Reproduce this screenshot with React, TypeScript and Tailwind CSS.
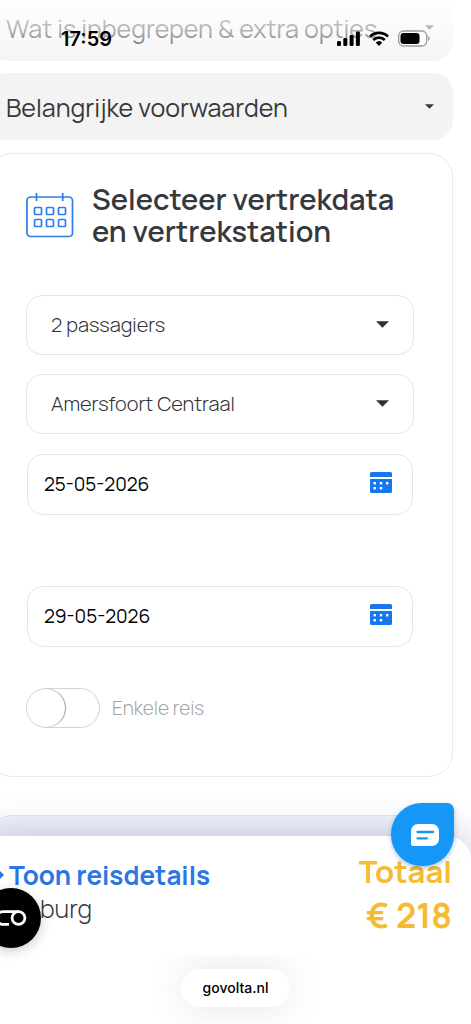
import { useState } from "react";
import type { ReactNode } from "react";

function Caret({ className }: { className: string }) {
  return (
    <svg viewBox="0 0 12 6" className={className} fill="currentColor" aria-hidden="true">
      <path d="M0 0h12L6 6z" />
    </svg>
  );
}

function CalendarOutline() {
  return (
    <svg viewBox="0 0 48 46" className="h-[46px] w-12 shrink-0 text-[#2b7de9]" fill="none" stroke="currentColor" strokeWidth="1.7" aria-hidden="true">
      <rect x="1" y="5" width="45.500" height="39.500" rx="3.500" />
      <path d="M10.500 1v8M36.700 1v8" />
      {[15.5, 27.5].map((y) =>
        [8.5, 20.5, 32.5].map((x) => <rect key={`${x}-${y}`} x={x} y={y} width="7" height="7" rx="1" />),
      )}
    </svg>
  );
}

function CalendarSolid() {
  return (
    <svg viewBox="0 0 22 21" className="h-[21px] w-[22px]" aria-hidden="true">
      <path fill="#1677f0" d="M1.500 0h19A1.500 1.500 0 0 1 22 1.500V5H0V1.500A1.500 1.500 0 0 1 1.500 0zM0 7h22v12.500a1.500 1.500 0 0 1-1.500 1.500h-19A1.500 1.500 0 0 1 0 19.500z" />
      <g fill="#fff">
        <rect x="3.500" y="10" width="2.400" height="2.400" />
        <rect x="9.800" y="10" width="2.400" height="2.400" />
        <rect x="16" y="10" width="2.400" height="2.400" />
        <rect x="3.500" y="15" width="2.400" height="2.400" />
        <rect x="9.800" y="15" width="2.400" height="2.400" />
      </g>
    </svg>
  );
}

function AccordionButton({ children }: { children: ReactNode }) {
  return (
    <button type="button" className="flex h-[67px] w-full items-center justify-between rounded-[20px] bg-[#f3f3f3] pt-0.5 pr-[19px] pl-[18px] text-left text-[25px] whitespace-nowrap text-[#36383d]">
      {children}
      <Caret className="mb-0.5 h-[5px] w-[9px]" />
    </button>
  );
}

function SelectField({ label, options }: { label: string; options: string[] }) {
  return (
    <div className="relative">
      <select aria-label={label} className="h-[60px] w-full appearance-none rounded-2xl border border-[#e6e6e6] bg-white px-6 text-[20px] font-light text-[#2e3035]">
        {options.map((o) => (
          <option key={o}>{o}</option>
        ))}
      </select>
      <Caret className="pointer-events-none absolute top-[26px] right-[25px] h-[7px] w-[13px] text-[#2e3035]" />
    </div>
  );
}

function DateField({ label, value }: { label: string; value: string }) {
  return (
    <div className="flex h-[61px] items-center rounded-2xl border border-[#e6e6e6] bg-white pr-5 pl-4">
      <input aria-label={label} defaultValue={value} className="min-w-0 flex-1 bg-transparent text-[19px] text-black outline-none" />
      <button type="button" aria-label="Kalender openen" className="mb-1">
        <CalendarSolid />
      </button>
    </div>
  );
}

function StatusBar() {
  return (
    <div className="pointer-events-none absolute inset-x-0 top-0 flex h-[62px] items-center justify-between bg-linear-to-b from-white/90 via-white/60 to-white/10 pt-[15px] pr-[41px] pl-[61px]">
      <span className="font-['Inter',sans-serif] text-[20px] leading-6 font-semibold text-black">17:59</span>
      <div className="flex items-center gap-[9px] text-black">
        <svg viewBox="0 0 23 15" className="h-[15px] w-[23px]" fill="currentColor" aria-hidden="true">
          <rect x="0" y="10" width="4" height="5" rx="1.200" />
          <rect x="6.300" y="7" width="4" height="8" rx="1.200" />
          <rect x="12.600" y="4" width="4" height="11" rx="1.200" />
          <rect x="18.900" y="0.500" width="4" height="14.500" rx="1.200" />
        </svg>
        <svg viewBox="0 0 20 15" className="h-[15px] w-5" fill="none" stroke="currentColor" strokeWidth="2.700" aria-hidden="true">
          <path d="M1 5.500a13 13 0 0 1 18 0M4.200 9a8.300 8.300 0 0 1 11.600 0" />
          <path fill="currentColor" stroke="none" d="M6.700 11.600a4.800 4.800 0 0 1 6.600 0L10 15z" />
        </svg>
        <svg viewBox="0 0 32 17" className="h-[17px] w-8" aria-hidden="true">
          <rect x="0.700" y="1" width="28" height="15" rx="4.800" fill="#fff" stroke="#999" strokeWidth="1.300" />
          <rect x="2.500" y="3" width="19" height="11" rx="3" fill="#000" />
          <path d="M30.300 6c1.600.8 1.600 4.200 0 5z" fill="#888" />
        </svg>
      </div>
    </div>
  );
}

export default function App() {
  const [oneWay, setOneWay] = useState(false);

  return (
    <div className="relative flex min-h-screen flex-col overflow-hidden bg-white font-['Manrope','Inter',sans-serif]">
      <main className="-mt-[6px] -ml-3 flex grow flex-col pr-[18px]">
        <AccordionButton>Wat is inbegrepen &amp; extra opties</AccordionButton>
        <div className="mt-3">
          <AccordionButton>Belangrijke voorwaarden</AccordionButton>
        </div>

        <section className="mt-[13px] rounded-3xl border border-[#eaeaf0] pt-[29px] pr-[38px] pb-12 pl-[37px]">
          <div className="flex items-center gap-[18px]">
            <CalendarOutline />
            <h2 className="text-[29px] leading-8 font-semibold text-[#36383d]">
              Selecteer vertrekdata
              <br />
              en vertrekstation
            </h2>
          </div>

          <form className="mt-12">
            <div className="flex flex-col gap-[19px]">
              <SelectField label="Passagiers" options={["2 passagiers", "3 passagiers"]} />
              <SelectField label="Vertrekstation" options={["Amersfoort Centraal", "Utrecht Centraal"]} />
            </div>
            <div className="mx-px mt-5 flex flex-col gap-[71px]">
              <DateField label="Vertrekdatum" value="25-05-2026" />
              <DateField label="Retourdatum" value="29-05-2026" />
            </div>
            <label className="mt-[41px] flex items-center gap-3 text-[19px] font-light text-[#a5a5a5]">
              <input type="checkbox" role="switch" checked={oneWay} onChange={(e) => setOneWay(e.target.checked)} className="peer sr-only" />
              <span className="flex h-10 w-[74px] items-center rounded-full border border-[#d4d4d4] bg-white peer-checked:justify-end">
                <span className="size-[38px] rounded-full bg-white shadow-[1px_0_1px_#999]" />
              </span>
              Enkele reis
            </label>
          </form>
        </section>

        <section className="mt-[38px] min-h-12 grow rounded-t-3xl border border-b-0 border-[#e3e6f2] bg-[#f2f4fb]" />
      </main>

      <footer className="relative -mt-7 -ml-6 rounded-t-3xl bg-white shadow-[0_-6px_32px_rgba(75,90,150,0.28)]">
        <div className="flex h-[119px] items-start justify-between pr-[19px] pl-6">
          <div className="pt-[23px]">
            <button type="button" className="flex items-center gap-[5px] text-[26px] leading-8 font-bold text-[#2b76e5]">
              <svg viewBox="0 0 4 8" className="h-2 w-1" fill="currentColor" aria-hidden="true">
                <path d="M0 0l4 4-4 4z" />
              </svg>
              Toon reisdetails
            </button>
            <p className="pl-10 text-[25px] leading-9 font-light text-[#36383d]">burg</p>
          </div>
          <div className="flex flex-col pt-[13px] text-right font-bold text-[#f4bb33]">
            <span className="text-[31px] leading-[44px]">Totaal</span>
            <span className="text-[34px] leading-[44px]">€ 218</span>
          </div>
        </div>
        <div className="flex h-[69px] justify-center overflow-hidden pt-[14px] pl-6">
          <a href="#" className="flex h-[38px] items-center rounded-full bg-white px-[22px] font-['Inter',sans-serif] text-sm font-medium text-black shadow-[0_0_40px_rgba(0,0,0,0.11)]">
            govolta.nl
          </a>
        </div>

        <button type="button" aria-label="Cookie-instellingen" className="absolute top-[52px] left-[5px] size-[60px] rounded-full bg-black shadow-[0_3px_12px_rgba(0,0,0,0.2)]">
          <svg viewBox="0 0 60 60" className="size-full" fill="none" stroke="#fff" strokeWidth="2.800" aria-hidden="true">
            <circle cx="37.500" cy="30" r="6.400" />
            <path d="M37.500 23.600H22a6.400 6.400 0 0 0 0 12.800h6" />
          </svg>
        </button>
        <button type="button" aria-label="Chat openen" className="absolute -top-[33px] right-[17px] flex size-[63px] items-center justify-center rounded-[31px] rounded-tr-[7px] bg-[#1597f8] shadow-[0_2px_5px_rgba(0,60,140,0.3)]">
          <svg viewBox="0 0 28 22" className="ml-1 h-[22px] w-7" aria-hidden="true">
            <path fill="#fff" d="M7 0h14a7 7 0 0 1 7 7v8a7 7 0 0 1-7 7H2a2 2 0 0 1-2-2V7a7 7 0 0 1 7-7z" />
            <path d="M6.500 8h15.500M6.500 14.300h9.500" stroke="#1597f8" strokeWidth="2.300" strokeLinecap="round" />
          </svg>
        </button>
      </footer>

      <StatusBar />
    </div>
  );
}
